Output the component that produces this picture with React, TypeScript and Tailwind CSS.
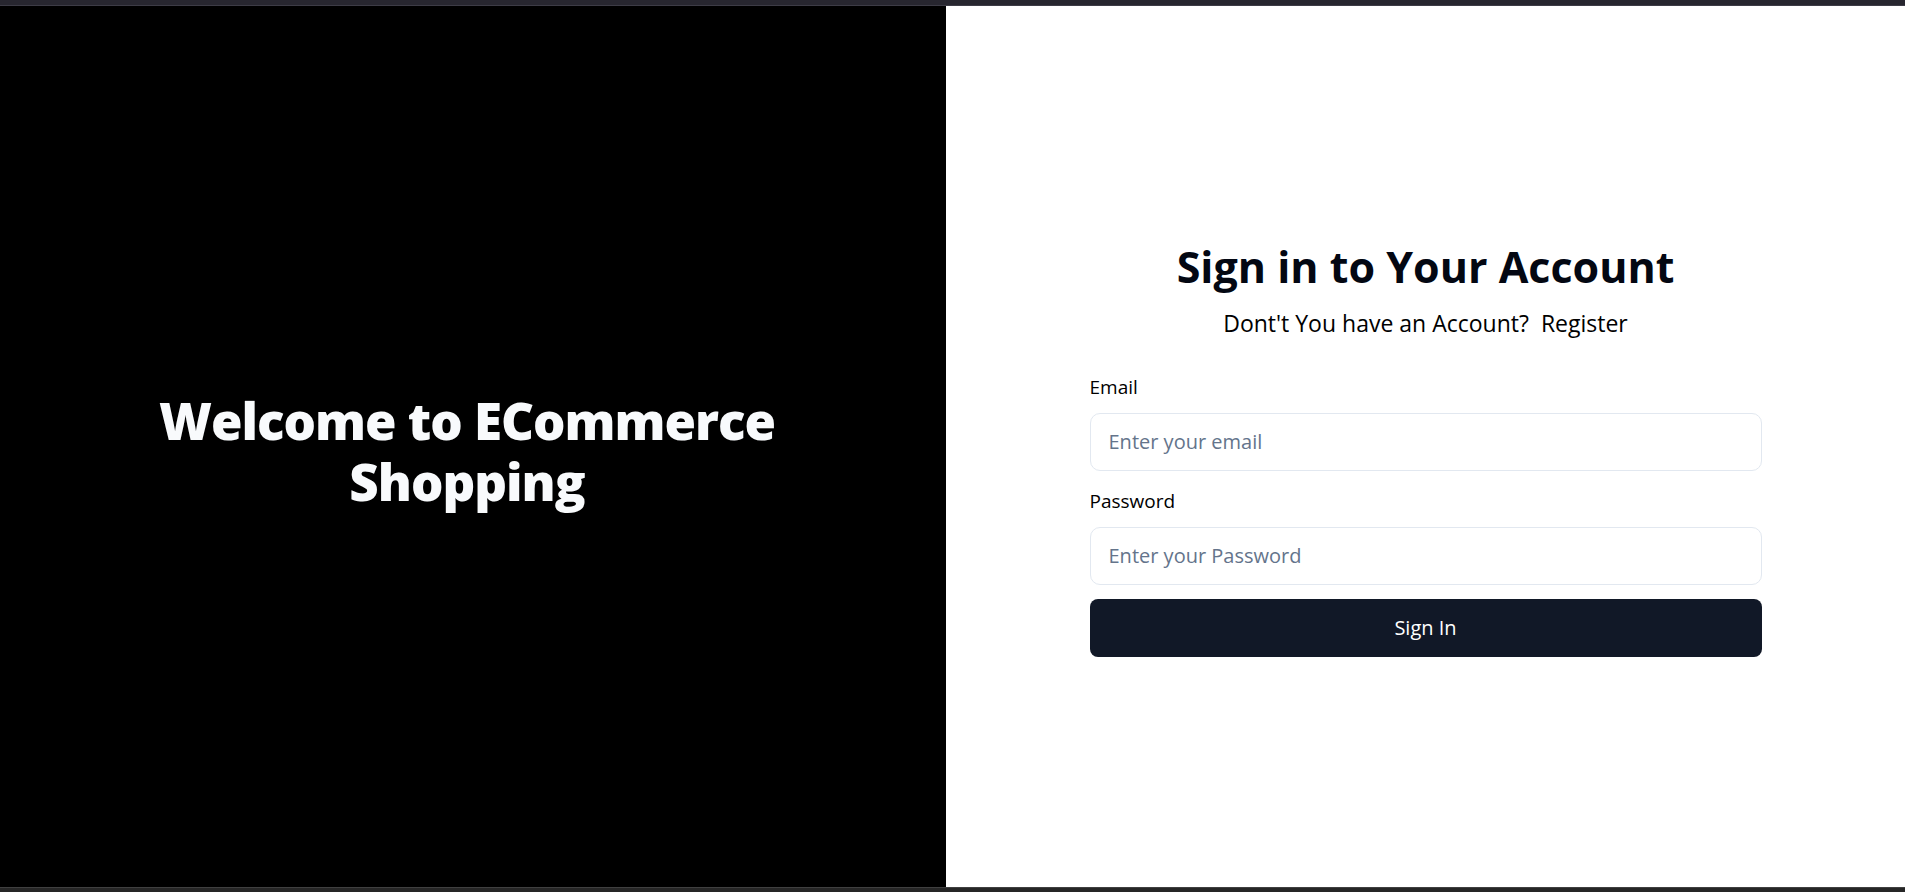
export default function App() {
  return (
    <div className="flex h-[892px] flex-col bg-black" style={{ fontFamily: '"Open Sans", "Noto Sans", sans-serif' }}>
      <div className="h-[6px] border-b border-[#3d3c46] bg-[#27262f]" />
      <div className="flex flex-1">
        <div className="flex w-[946px] items-center justify-center bg-black pr-[12px]">
          <h1 className="mt-[8px] text-center text-[51px] font-extrabold leading-[61px] tracking-[-1px] text-[#f8fafc]">
            Welcome to ECommerce
            <br />
            Shopping
          </h1>
        </div>
        <div className="flex flex-1 items-center justify-center bg-white">
          <div className="w-[672px]">
            <h2 className="text-center text-[43px] font-bold leading-[60px] text-[#030712]">Sign in to Your Account</h2>
            <p className="mt-[11px] text-center text-[23px] leading-[30px] text-black">
              Dont't You have an Account?&nbsp; <a href="#" className="text-black">Register</a>
            </p>
            <form className="mt-[35px]" onSubmit={(e) => e.preventDefault()}>
              <label className="block text-[19px] leading-[28px] text-black">Email</label>
              <input
                type="email"
                placeholder="Enter your email"
                className="mt-[12px] block h-[58px] w-full rounded-[10px] border border-[#e2e8f0] px-[18px] text-[20px] text-black outline-none placeholder:text-[#64748b]"
              />
              <label className="mt-[16px] block text-[19px] leading-[28px] text-black">Password</label>
              <input
                type="password"
                placeholder="Enter your Password"
                className="mt-[12px] block h-[58px] w-full rounded-[10px] border border-[#e2e8f0] px-[18px] text-[20px] text-black outline-none placeholder:text-[#64748b]"
              />
              <button type="submit" className="mt-[14px] block h-[58px] w-full rounded-[8px] bg-[#111827] text-[20px] text-white">
                Sign In
              </button>
            </form>
          </div>
        </div>
      </div>
      <div className="h-[5px] border-t border-[#404040] bg-[#262626]" />
    </div>
  );
}
